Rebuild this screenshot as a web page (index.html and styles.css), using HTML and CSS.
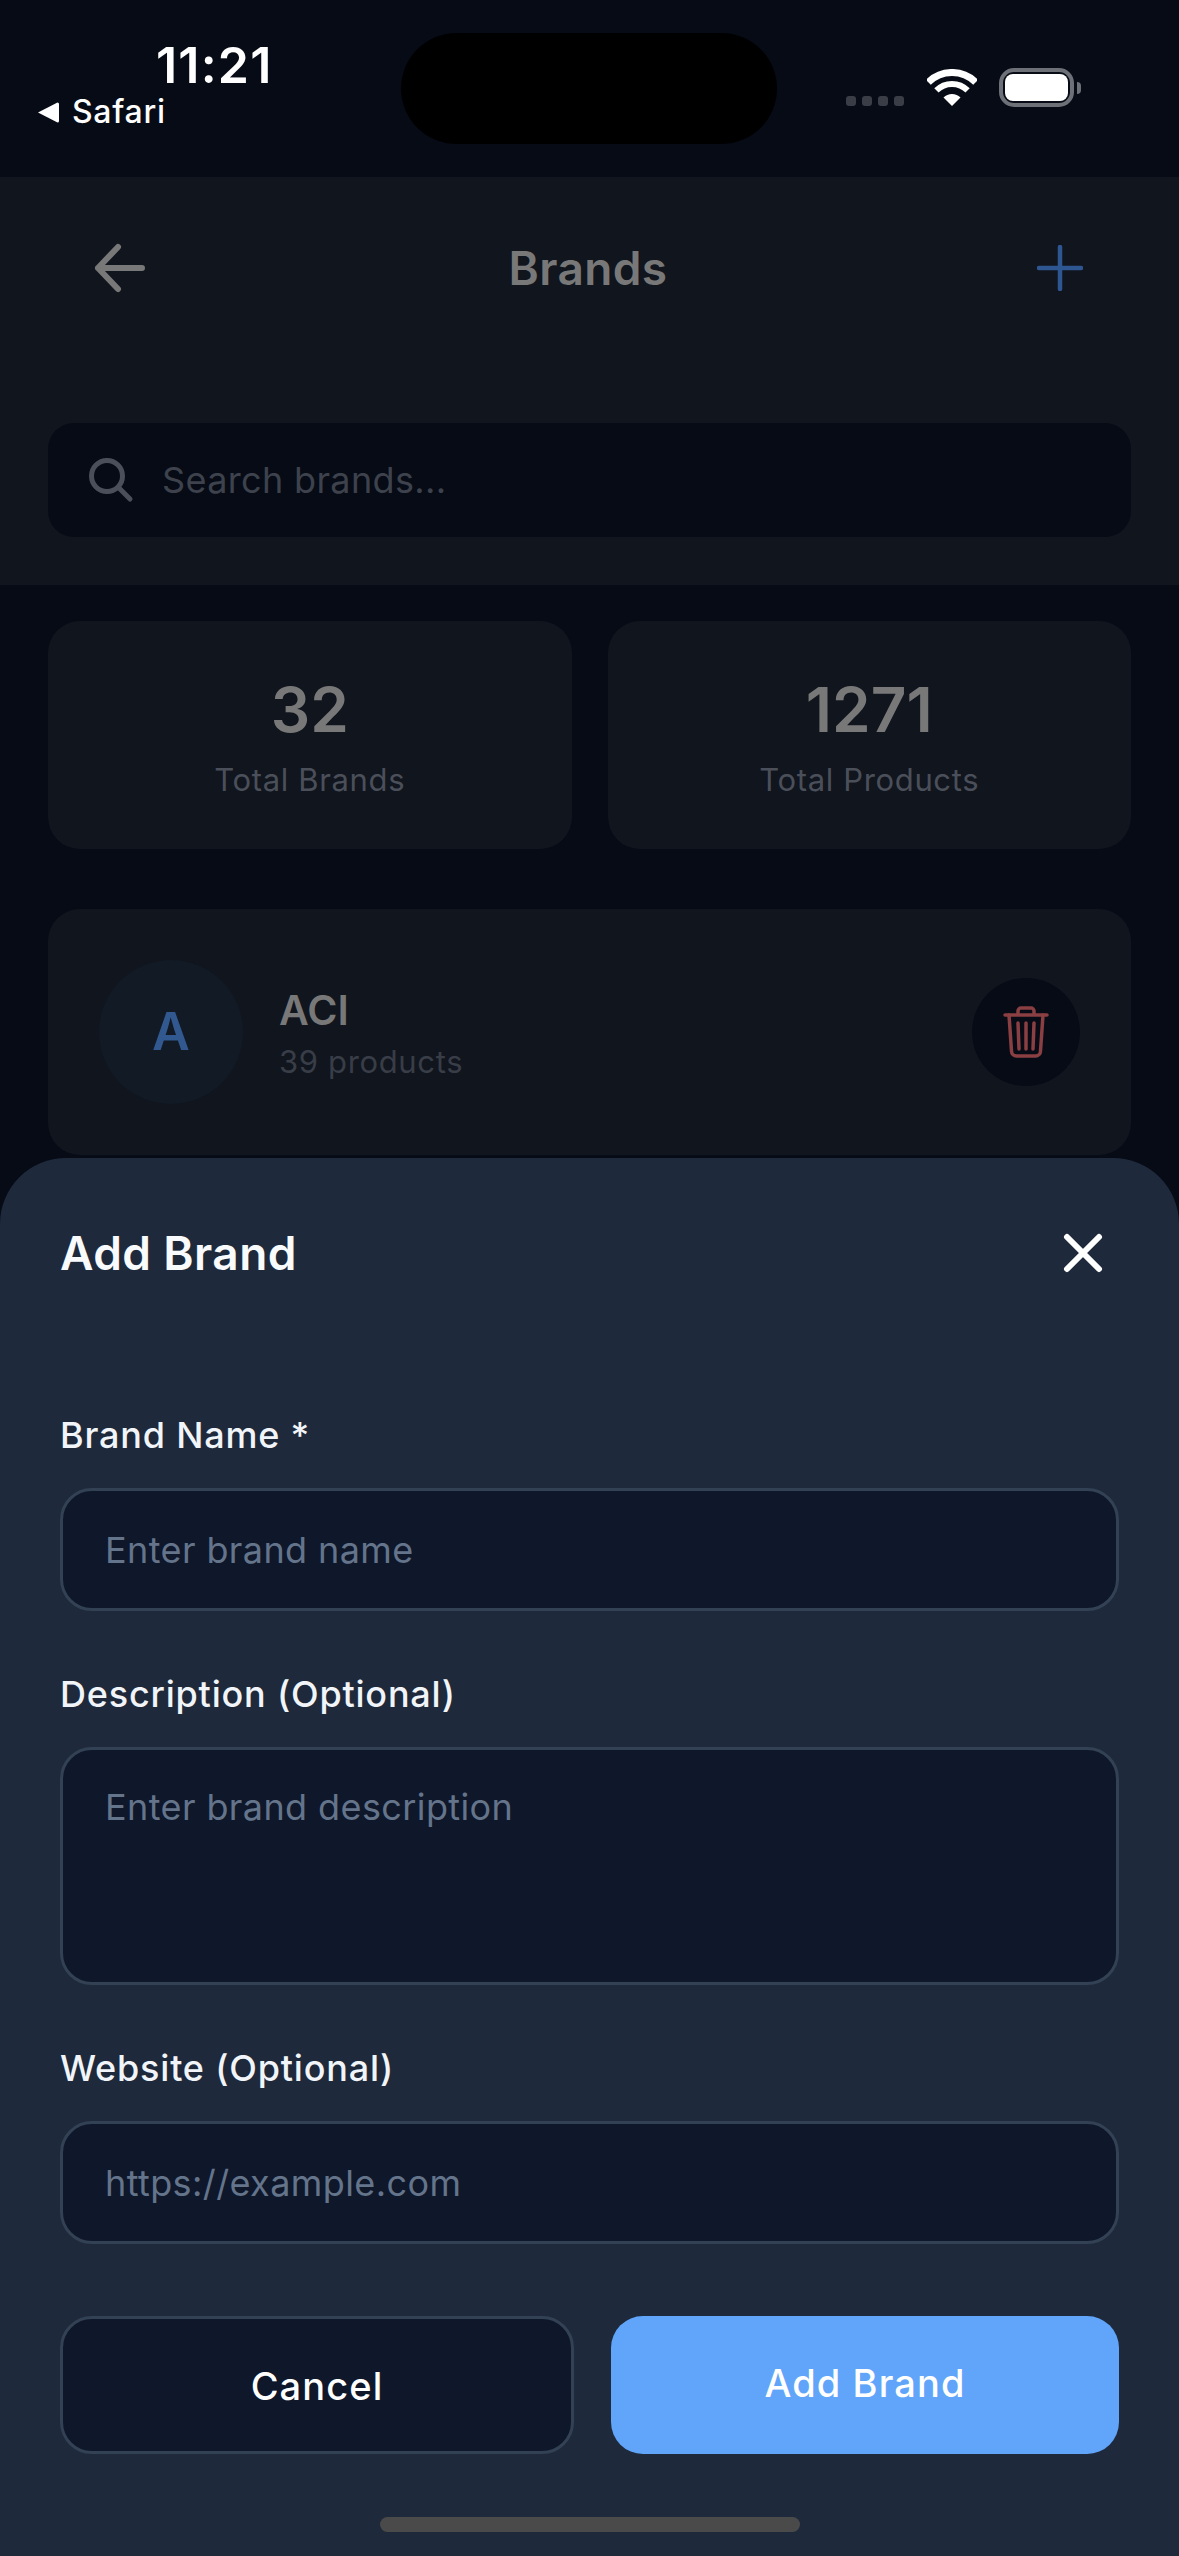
FILE: index.html
```html
<!DOCTYPE html>
<html lang="en">

<head>
    <meta charset="UTF-8">
    <meta name="viewport" content="width=device-width, initial-scale=1.0">
    <title>Brands</title>
    <link rel="stylesheet" href="styles.css">
</head>

<body>
    <div class="screen">
        <div class="status-bar">
            <div class="status-left">
                <div class="clock">11:21</div>
                <div class="back-app">
                    <svg width="21" height="21" viewBox="0 0 21 21"><path d="M19.500.500a1.500 1.500 0 0 1 1.500 1.500v17a1.500 1.500 0 0 1-1.500 1.500L0 10.500z" fill="#fff"/></svg>
                    <span>Safari</span>
                </div>
            </div>
            <div class="island"></div>
            <div class="status-right">
                <div class="signal"><i></i><i></i><i></i><i></i></div>
                <svg class="wifi" width="50" height="37" viewBox="0 0 50 37" fill="none" stroke="#fff">
                    <path d="M25 37 16.500 28.500a12 12 0 0 1 17 0z" fill="#fff" stroke="none"/>
                    <path d="M9.400 21.400a22 22 0 0 1 31.200 0" stroke-width="6"/>
                    <path d="M1.300 13.300a33.500 33.500 0 0 1 47.400 0" stroke-width="7"/>
                </svg>
                <div class="battery"><div class="battery-level"></div></div>
                <div class="battery-tip"></div>
            </div>
        </div>

        <div class="top-panel">
            <div class="nav-row">
                <svg width="54" height="52" viewBox="0 0 54 52" fill="none" stroke="#787878" stroke-width="6" stroke-linecap="round" stroke-linejoin="round">
                    <path d="M49 26H5M25 5 5 26l20 21"/>
                </svg>
                <h1>Brands</h1>
                <svg class="nav-add" width="46" height="46" viewBox="0 0 46 46" fill="none" stroke="#2e5691" stroke-width="4.500" stroke-linecap="round">
                    <path d="M23 2v42M2 23h42"/>
                </svg>
            </div>
            <div class="search-box">
                <svg width="46" height="46" viewBox="0 0 46 46" fill="none" stroke="#4a4f59" stroke-width="5" stroke-linecap="round">
                    <circle cx="19" cy="19" r="15.500"/>
                    <path d="m31 31 11 11"/>
                </svg>
                <span>Search brands...</span>
            </div>
        </div>

        <div class="content">
            <div class="stats">
                <div class="stat-card">
                    <div class="stat-value">32</div>
                    <div class="stat-label">Total Brands</div>
                </div>
                <div class="stat-card">
                    <div class="stat-value">1271</div>
                    <div class="stat-label">Total Products</div>
                </div>
            </div>

            <div class="brand-card">
                <div class="avatar">A</div>
                <div class="brand-info">
                    <div class="brand-name">ACI</div>
                    <div class="brand-count">39 products</div>
                </div>
                <div class="delete-btn">
                    <svg width="46" height="54" viewBox="0 0 46 54" fill="none" stroke="#8a3f42" stroke-width="3.500" stroke-linecap="round" stroke-linejoin="round">
                        <path d="M2 10h42M15 10V6a3 3 0 0 1 3-3h10a3 3 0 0 1 3 3v4"/>
                        <path d="M6 10l2.500 36a5 5 0 0 0 5 5h19a5 5 0 0 0 5-5L40 10"/>
                        <path d="M15 18l1 26M23 18v26M31 18l-1 26"/>
                    </svg>
                </div>
            </div>
        </div>

        <div class="sheet">
            <div class="sheet-head">
                <h2>Add Brand</h2>
                <svg width="40" height="40" viewBox="0 0 40 40" fill="none" stroke="#fff" stroke-width="6" stroke-linecap="round">
                    <path d="M4 4l32 32M36 4 4 36"/>
                </svg>
            </div>

            <div class="fields">
                <div class="field">
                    <label>Brand Name *</label>
                    <div class="input">Enter brand name</div>
                </div>
                <div class="field">
                    <label>Description (Optional)</label>
                    <div class="input textarea">Enter brand description</div>
                </div>
                <div class="field">
                    <label>Website (Optional)</label>
                    <div class="input">https://example.com</div>
                </div>
            </div>

            <div class="actions">
                <div class="btn btn-cancel">Cancel</div>
                <div class="btn btn-add">Add Brand</div>
            </div>
            <div class="home-bar"></div>
        </div>
    </div>
</body>

</html>
```

FILE: styles.css
```css
* {
    box-sizing: border-box;
}

body {
    margin: 0;
    background-color: #060b16;
    font-family: Inter, "Noto Sans", sans-serif;
}

.screen {
    position: relative;
    width: 1179px;
    height: 2556px;
    overflow: hidden;
    background-color: #060b16;
}

/* Status bar */
.status-bar {
    position: relative;
    height: 177px;
    display: flex;
    justify-content: space-between;
    padding: 0 98px 0 38px;
}

.status-left {
    padding-top: 37px;
    color: #fff;
}

.clock {
    padding-left: 118px;
    font-size: 50px;
    line-height: 56px;
    font-weight: 600;
    letter-spacing: 1.2px;
}

.back-app {
    display: flex;
    align-items: center;
    gap: 13px;
    font-size: 32px;
    line-height: 38px;
    font-weight: 500;
    letter-spacing: 0.7px;
}

.island {
    position: absolute;
    left: 401px;
    top: 33px;
    width: 376px;
    height: 111px;
    border-radius: 56px;
    background-color: #000;
}

.status-right {
    display: flex;
    align-items: flex-start;
    padding-top: 68px;
}

.signal {
    display: flex;
    gap: 6px;
    margin-top: 28px;
    margin-right: 23px;
}

.signal i {
    width: 10px;
    height: 10px;
    border-radius: 3px;
    background-color: #3a3d46;
}

.wifi {
    margin-top: 1px;
    margin-right: 22px;
}

.battery {
    width: 75px;
    height: 39px;
    padding: 2px;
    border: 4px solid #6d7077;
    border-radius: 15px;
}

.battery-level {
    height: 100%;
    border-radius: 8px;
    background-color: #fff;
}

.battery-tip {
    width: 4px;
    height: 12px;
    margin: 14px 0 0 3px;
    border-radius: 0 5px 5px 0;
    background-color: #6d7077;
}

/* Header */
.top-panel {
    height: 408px;
    padding: 33px 48px 0;
    background-color: #10151e;
}

.nav-row {
    display: grid;
    grid-template-columns: 1fr auto 1fr;
    align-items: center;
    height: 115px;
    padding: 0 48px 0 45px;
}

.nav-row h1 {
    margin: 0;
    color: #787878;
    font-size: 46px;
    font-weight: 600;
    letter-spacing: 0.4px;
}

.nav-add {
    justify-self: end;
}

.search-box {
    display: flex;
    align-items: center;
    gap: 28px;
    height: 114px;
    margin-top: 98px;
    padding-left: 40px;
    border-radius: 26px;
    background-color: #060b16;
    color: #3d424c;
    font-size: 36px;
    letter-spacing: 0.35px;
}

/* Main content */
.content {
    padding: 36px 48px 0;
}

.stats {
    display: flex;
    gap: 36px;
}

.stat-card {
    flex: 1;
    height: 228px;
    padding-top: 54px;
    border-radius: 32px;
    background-color: #10151e;
    text-align: center;
}

.stat-value {
    color: #787878;
    font-size: 62px;
    line-height: 70px;
    font-weight: 600;
}

.stat-label {
    margin-top: 15px;
    color: #4a4f59;
    font-size: 31px;
    line-height: 40px;
    letter-spacing: 0.65px;
}

.brand-card {
    display: flex;
    align-items: center;
    height: 246px;
    margin-top: 60px;
    padding: 0 51px;
    border-radius: 32px;
    background-color: #10151e;
}

.avatar {
    width: 144px;
    height: 144px;
    border-radius: 50%;
    background-color: #121a25;
    color: #32598f;
    font-size: 52px;
    font-weight: 600;
    line-height: 144px;
    text-align: center;
}

.brand-info {
    flex: 1;
    margin-left: 36px;
    padding-top: 6px;
}

.brand-name {
    color: #787878;
    font-size: 41px;
    line-height: 50px;
    font-weight: 600;
}

.brand-count {
    margin-top: 4px;
    color: #383d47;
    font-size: 31px;
    line-height: 46px;
    letter-spacing: 0.65px;
}

.delete-btn {
    display: flex;
    justify-content: center;
    align-items: center;
    width: 108px;
    height: 108px;
    border-radius: 50%;
    background-color: #060b16;
}

/* Bottom sheet */
.sheet {
    position: absolute;
    left: 0;
    right: 0;
    top: 1158px;
    bottom: 0;
    padding: 0 60px;
    border-radius: 66px 66px 0 0;
    background-color: #1e293b;
}

.sheet-head {
    display: flex;
    justify-content: space-between;
    align-items: center;
    height: 190px;
    padding-right: 16px;
}

.sheet-head h2 {
    margin: 0;
    color: #f8fafc;
    font-size: 46px;
    font-weight: 600;
    letter-spacing: 0.4px;
}

.fields {
    padding-top: 65px;
}

.field {
    margin-bottom: 61px;
}

.field label {
    display: block;
    margin-bottom: 31px;
    color: #f1f5f9;
    font-size: 36px;
    line-height: 44px;
    font-weight: 450;
    letter-spacing: 0.8px;
}

.input {
    display: flex;
    align-items: center;
    height: 123px;
    padding: 0 42px;
    border: 3px solid #334155;
    border-radius: 32px;
    background-color: #0f172a;
    color: #64748b;
    font-size: 36px;
    letter-spacing: 0.4px;
}

.textarea {
    align-items: flex-start;
    height: 238px;
    padding-top: 35px;
}

.actions {
    display: flex;
    gap: 37px;
    margin-top: 72px;
}

.btn {
    display: flex;
    justify-content: center;
    align-items: center;
    flex: 1;
    height: 138px;
    border-radius: 32px;
    color: #fff;
    font-size: 38px;
    font-weight: 500;
    letter-spacing: 1.1px;
}

.btn-cancel {
    padding-top: 1px;
    border: 3px solid #334155;
    background-color: #0f172a;
}

.btn-add {
    padding-bottom: 4px;
    background-color: #60a5fa;
}

.home-bar {
    width: 420px;
    height: 15px;
    margin: 63px auto 0;
    border-radius: 8px;
    background-color: #4a4a4a;
}
```
